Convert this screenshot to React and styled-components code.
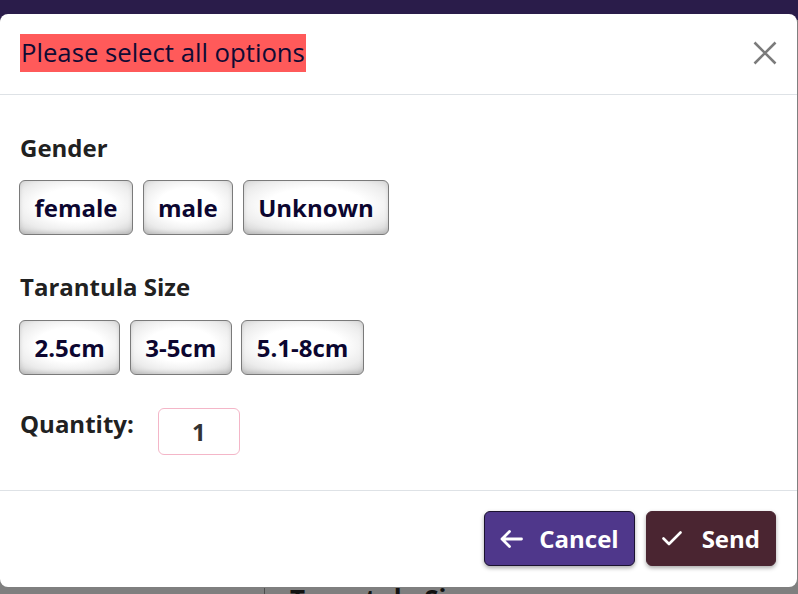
import React from "react";
import styled, { createGlobalStyle } from "styled-components";

const FONT = `"Open Sans", "Noto Sans", "DejaVu Sans", sans-serif`;

const GlobalStyle = createGlobalStyle`
  html, body { margin: 0; padding: 0; }
  body {
    background: #7f7f7f;
    font-family: ${FONT};
    overflow: hidden;
  }
  * { box-sizing: border-box; }
`;

const Page = styled.div`
  width: 798px;
  height: 594px;
  overflow: hidden;
  display: flex;
  flex-direction: column;
  background: linear-gradient(#2a1c4a 0 20px, #7f7f7f 20px);
`;

const Modal = styled.div`
  margin-top: 14px;
  width: 797px;
  background: #fff;
  border-radius: 8px;
  display: flex;
  flex-direction: column;
  flex-shrink: 0;
`;

const Header = styled.div`
  display: flex;
  align-items: center;
  justify-content: space-between;
  padding: 20px 20px 22px 20px;
  border-bottom: 1px solid #dee2e6;
`;

const Title = styled.h5`
  margin: 0;
  background: #ff5a5a;
  color: #100b33;
  font-family: ${FONT};
  font-weight: 500;
  font-size: 25.7px;
  line-height: 38px;
  padding: 0 1px;
`;

const CloseButton = styled.button`
  border: none;
  background: transparent;
  padding: 0;
  width: 25px;
  height: 25px;
  display: flex;
  align-items: center;
  justify-content: center;
  cursor: pointer;
`;

const Body = styled.div`
  padding: 38px 20px 35px 20px;
  border-bottom: 1px solid #dee2e6;
  display: flex;
  flex-direction: column;
`;

const Label = styled.div`
  font-family: ${FONT};
  font-weight: 700;
  font-size: 24px;
  line-height: 29px;
  color: #212121;
`;

const OptionRow = styled.div`
  display: flex;
  gap: 9.5px;
  margin-top: ${(p) => p.$top}px;
  margin-left: -1px;
`;

const OptionButton = styled.button`
  height: 55px;
  padding: 0 14.5px;
  border: 1px solid #7a7a7a;
  border-radius: 6px;
  background: radial-gradient(ellipse 75% 70% at 50% 45%, #ffffff 45%, #ececec 75%, #cfcfcf 100%);
  box-shadow: inset 0 -2px 4px rgba(0, 0, 0, 0.12);
  color: #0c0630;
  font-family: ${FONT};
  font-weight: 700;
  font-size: 24px;
  cursor: pointer;
`;

const Section = styled.div`
  margin-top: ${(p) => p.$top || 0}px;
`;

const QuantityRow = styled.div`
  display: flex;
  align-items: flex-start;
  gap: 24px;
  margin-top: 33px;
`;

const QuantityLabel = styled(Label)`
  margin-top: 1px;
`;

const QuantityInput = styled.input`
  width: 82px;
  height: 47px;
  border: 1px solid #f4b6c8;
  border-radius: 6px;
  text-align: center;
  font-family: ${FONT};
  font-weight: 700;
  font-size: 24px;
  color: #333;
  outline: none;
  padding: 0;
`;

const Footer = styled.div`
  display: flex;
  justify-content: flex-end;
  gap: 11px;
  padding: 20px 21px 21px 20px;
`;

const ActionButton = styled.button`
  height: 55px;
  display: flex;
  align-items: center;
  gap: ${(p) => p.$gap}px;
  padding: 0 15px 0 15px;
  border-radius: 6px;
  border: 1px solid ${(p) => p.$border};
  background: ${(p) => p.$bg};
  color: #fff;
  font-family: ${FONT};
  font-weight: 700;
  font-size: 24px;
  box-shadow: 0 2px 4px rgba(0, 0, 0, 0.35);
  cursor: pointer;
`;

const BehindStrip = styled.div`
  height: 8px;
  margin-top: 1px;
  display: flex;
  overflow: hidden;
`;

const BehindSidebar = styled.div`
  width: 265px;
  border-right: 1px solid #4e4e4e;
  flex-shrink: 0;
`;

const BehindText = styled.div`
  margin-left: 25px;
  margin-top: -4px;
  font-family: ${FONT};
  font-weight: 700;
  font-size: 26px;
  line-height: 30px;
  color: #121212;
  white-space: nowrap;
`;

const ArrowLeftIcon = () => (
  <svg width="23" height="18" viewBox="0 0 23 18" fill="none">
    <path d="M21.5 9H2M9.5 1.5L2 9l7.5 7.5" stroke="#fff" strokeWidth="2.8" strokeLinecap="round" strokeLinejoin="round" />
  </svg>
);

const CheckIcon = () => (
  <svg width="20" height="15" viewBox="0 0 20 15" fill="none">
    <path d="M1.5 7.5l5.5 5.5L18.5 1.5" stroke="#fff" strokeWidth="2.6" strokeLinecap="round" strokeLinejoin="round" />
  </svg>
);

const CloseIcon = () => (
  <svg width="24" height="24" viewBox="0 0 24 24" fill="none">
    <path d="M1.5 1.5l21 21M22.5 1.5l-21 21" stroke="#7b7b7b" strokeWidth="2.6" />
  </svg>
);

export default function App() {
  return (
    <>
      <GlobalStyle />
      <Page>
        <Modal>
          <Header>
            <Title>Please select all options</Title>
            <CloseButton aria-label="Close">
              <CloseIcon />
            </CloseButton>
          </Header>
          <Body>
            <Section>
              <Label>Gender</Label>
              <OptionRow $top={18}>
                <OptionButton>female</OptionButton>
                <OptionButton>male</OptionButton>
                <OptionButton>Unknown</OptionButton>
              </OptionRow>
            </Section>
            <Section $top={37}>
              <Label>Tarantula Size</Label>
              <OptionRow $top={19}>
                <OptionButton>2.5cm</OptionButton>
                <OptionButton>3-5cm</OptionButton>
                <OptionButton>5.1-8cm</OptionButton>
              </OptionRow>
            </Section>
            <QuantityRow>
              <QuantityLabel>Quantity:</QuantityLabel>
              <QuantityInput defaultValue="1" />
            </QuantityRow>
          </Body>
          <Footer>
            <ActionButton $bg="#4f378b" $border="#1b1230" $gap={16}>
              <ArrowLeftIcon />
              Cancel
            </ActionButton>
            <ActionButton $bg="#4a2531" $border="#4a2531" $gap={20}>
              <CheckIcon />
              Send
            </ActionButton>
          </Footer>
        </Modal>
        <BehindStrip>
          <BehindSidebar />
          <BehindText>Tarantula Size</BehindText>
        </BehindStrip>
      </Page>
    </>
  );
}
